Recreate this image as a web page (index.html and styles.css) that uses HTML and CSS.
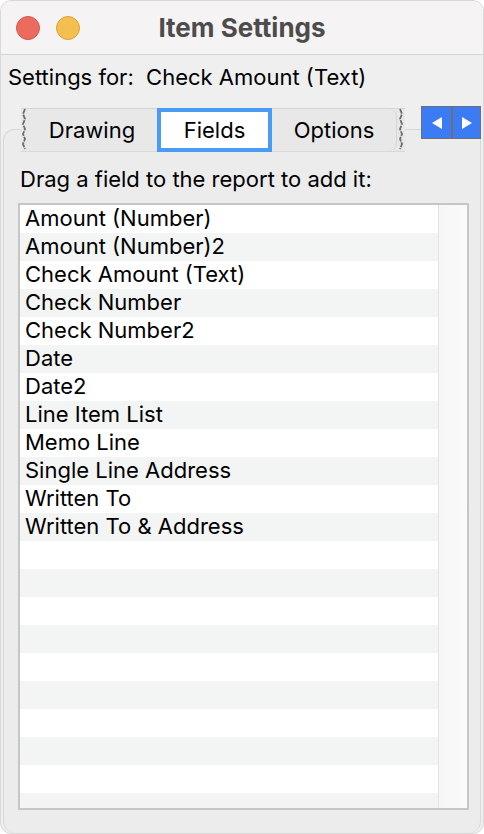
FILE: index.html
```html
<!DOCTYPE html>
<html lang="en">

<head>
  <meta charset="UTF-8">
  <meta name="viewport" content="width=device-width, initial-scale=1.0">
  <title>Item Settings</title>
  <link rel="stylesheet" href="styles.css">
</head>

<body>
  <div class="window">
    <div class="titlebar">
      <div class="lights">
        <span class="light red"></span>
        <span class="light yellow"></span>
      </div>
      <div class="title">Item Settings</div>
    </div>

    <div class="subject">Settings for:&nbsp; Check Amount (Text)</div>

    <div class="tabrow">
      <div class="strip">
        <svg class="jag" width="6" height="44" viewBox="0 0 6 44">
          <path d="M4 1 L2 6 L4 11 L2 16 L4 21 L2 26 L4 31 L2 36 L4 41" fill="none" stroke="#6c6c6c" stroke-width="1.8" stroke-dasharray="5 1"/>
        </svg>
        <div class="tab">Drawing</div>
        <div class="tab active">Fields</div>
        <div class="tab last">Options</div>
        <svg class="jag" width="8" height="44" viewBox="0 0 8 44">
          <path d="M3 1 L5 6 L3 11 L5 16 L3 21 L5 26 L3 31 L5 36 L3 41" fill="none" stroke="#6c6c6c" stroke-width="1.8" stroke-dasharray="5 1"/>
        </svg>
      </div>
      <div class="arrows">
        <button class="arrow">
          <svg width="12" height="14" viewBox="0 0 12 14"><path d="M11 1 L1 7 L11 13 Z" fill="#fff"/></svg>
        </button>
        <button class="arrow">
          <svg width="12" height="14" viewBox="0 0 12 14"><path d="M1 1 L11 7 L1 13 Z" fill="#fff"/></svg>
        </button>
      </div>
    </div>

    <div class="panel">
      <p class="hint">Drag a field to the report to add it:</p>
      <div class="listbox">
        <div class="rows" id="rows"></div>
        <div class="scrolltrack"></div>
      </div>
    </div>
  </div>

  <script>
    // Fill the field list, then pad it with empty striped rows
    const fields = [
      'Amount (Number)',
      'Amount (Number)2',
      'Check Amount (Text)',
      'Check Number',
      'Check Number2',
      'Date',
      'Date2',
      'Line Item List',
      'Memo Line',
      'Single Line Address',
      'Written To',
      'Written To & Address'
    ];
    const rows = document.getElementById('rows');
    for (let i = 0; i < 22; i++) {
      const row = document.createElement('div');
      row.className = 'row';
      row.textContent = fields[i] || '';
      rows.appendChild(row);
    }
  </script>
</body>

</html>
```

FILE: styles.css
```css
body {
  margin: 0;
  background: #ffffff;
  font-family: Inter, "Noto Sans", sans-serif;
  color: #000;
}

.window {
  width: 484px;
  height: 834px;
  box-sizing: border-box;
  background: #efefef;
  border: 1px solid #d9d9d9;
  border-radius: 11px;
  overflow: hidden;
  display: flex;
  flex-direction: column;
}

.titlebar {
  height: 53px;
  flex: none;
  background: #f6f3f5;
  border-bottom: 1px solid #d6d3d5;
  display: flex;
  align-items: center;
  position: relative;
}

.lights {
  display: flex;
  gap: 16px;
  padding-left: 15px;
}

.light {
  width: 24px;
  height: 24px;
  border-radius: 50%;
  box-sizing: border-box;
}

.red {
  background: #ec6a5e;
  border: 1px solid #d3574c;
}

.yellow {
  background: #f4bf4f;
  border: 1px solid #d9a33b;
}

.title {
  position: absolute;
  left: 0;
  right: 0;
  text-align: center;
  font-size: 26px;
  font-weight: 700;
  color: #4c4c4c;
  pointer-events: none;
}

.subject {
  font-size: 22px;
  padding: 9px 0 0 7px;
  height: 42px;
  box-sizing: border-box;
}

.tabrow {
  display: flex;
  align-items: flex-start;
  margin-top: 11px;
  margin-bottom: -23px;
  z-index: 1;
  position: relative;
}

.strip {
  display: flex;
  height: 44px;
  margin-left: 20px;
  background: #e8e8e8;
  border-top: 1px solid #d4d4d4;
  border-bottom: 1px solid #d9d9d9;
  box-sizing: border-box;
}

.jag {
  flex: none;
  margin-top: -1px;
}

.tab {
  font-size: 22px;
  display: flex;
  align-items: center;
  justify-content: center;
}

.tab:first-of-type {
  width: 130px;
}

.tab.active {
  width: 115px;
  box-sizing: border-box;
  background: #fff;
  border: 4px solid #4a9bf3;
  margin: -1px 0;
  height: 44px;
}

.tab.last {
  width: 124px;
  border-right: 1px solid #d4d4d4;
  border-radius: 0 8px 8px 0;
}

.arrows {
  display: flex;
  margin-left: 16px;
  margin-top: -2px;
  border: 1px solid #6f6f6f;
}

.arrow {
  width: 29px;
  height: 31px;
  padding: 0;
  border: none;
  background: #3b7cf4;
  display: flex;
  align-items: center;
  justify-content: center;
}

.arrow + .arrow {
  border-left: 2px solid #6f6f6f;
}

.panel {
  flex: 1;
  margin: 0 2px 0 2px;
  background: #ececec;
  border: 1px solid #d8d8d8;
  border-bottom: none;
  border-radius: 11px 11px 12px 12px;
  padding: 36px 11px 0 14px;
  display: flex;
  flex-direction: column;
}

.hint {
  margin: 0 0 0 2px;
  font-size: 22px;
  height: 37px;
  line-height: 27px;
}

.listbox {
  display: flex;
  height: 607px;
  box-sizing: border-box;
  border: 2px solid #c6c6c6;
  background: #fff;
  overflow: hidden;
}

.rows {
  flex: 1;
}

.row {
  height: 28px;
  line-height: 27px;
  font-size: 22px;
  padding-left: 5px;
  white-space: nowrap;
}

.row:nth-child(even) {
  background: #f3f4f4;
}

.scrolltrack {
  width: 28px;
  flex: none;
  border-left: 1px solid #e4e4e4;
  background: linear-gradient(to right, #f6f6f6, #fafafa);
}
```
